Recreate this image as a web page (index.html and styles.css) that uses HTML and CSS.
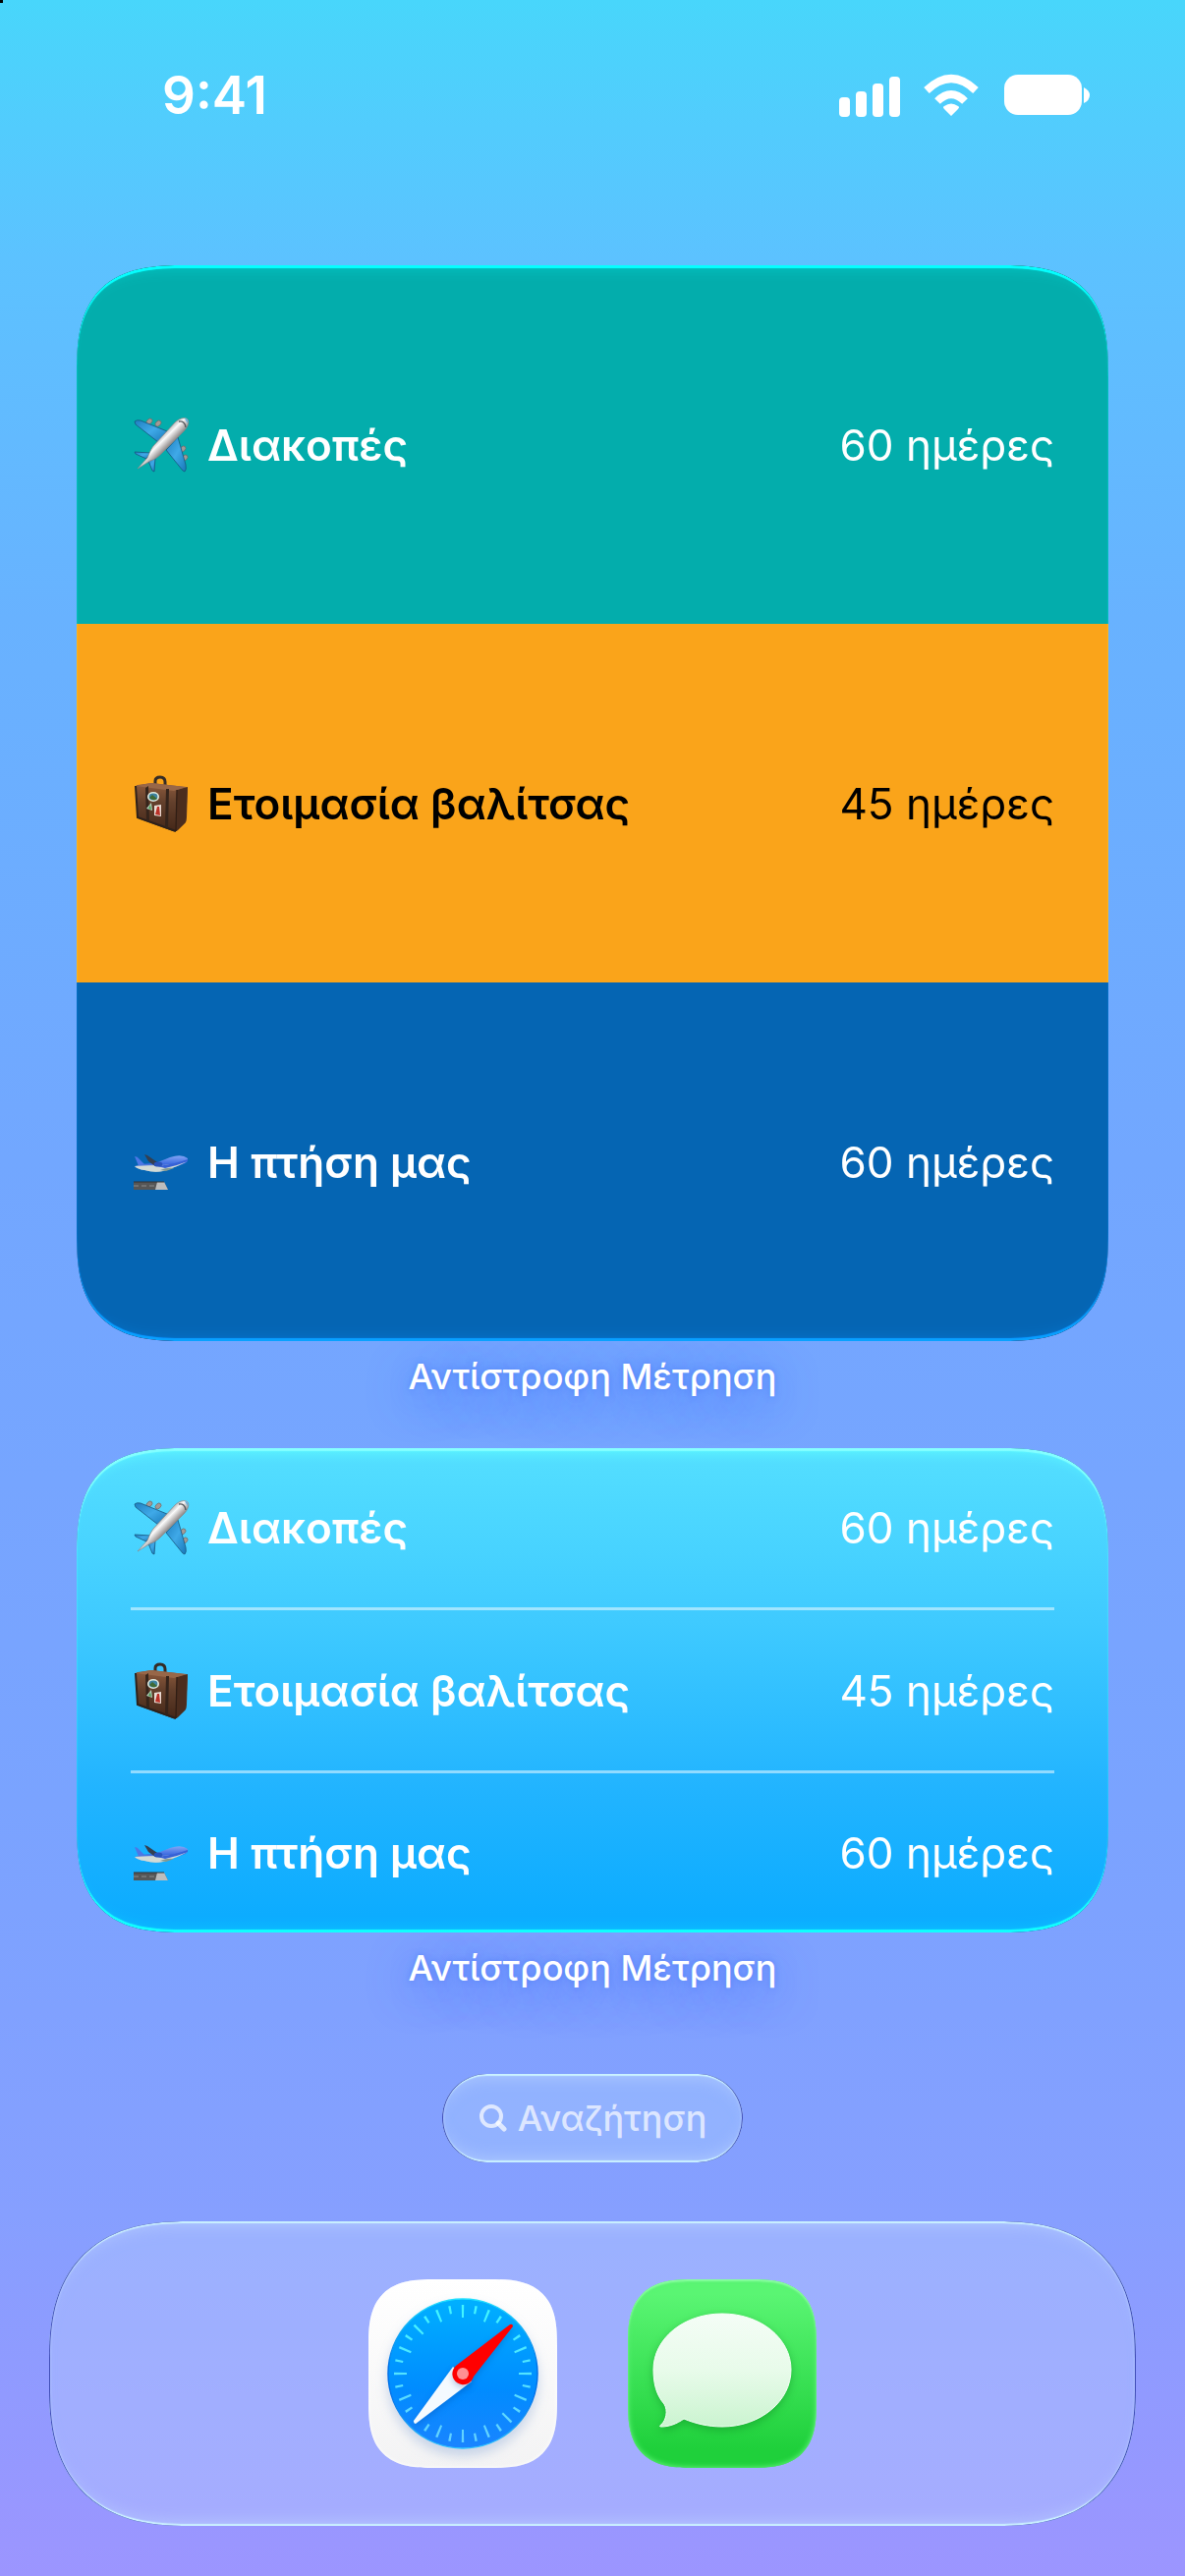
FILE: index.html
```
<!DOCTYPE html>
<html lang="el">
<head>
    <meta charset="UTF-8">
    <meta name="viewport" content="width=device-width, initial-scale=1.0">
    <title>Αντίστροφη Μέτρηση</title>
    <link rel="stylesheet" href="styles.css">
</head>
<body>
    <!-- shared emoji drawings -->
    <svg class="defs" width="0" height="0" aria-hidden="true">
        <defs>
            <linearGradient id="wing" x1="0" y1="0" x2="1" y2="1">
                <stop offset="0" stop-color="#1f7fc0"/>
                <stop offset="0.5" stop-color="#3fa9e8"/>
                <stop offset="1" stop-color="#1878b8"/>
            </linearGradient>
            <linearGradient id="hull" gradientUnits="userSpaceOnUse" x1="28" y1="22" x2="38" y2="32">
                <stop offset="0" stop-color="#a9a9ab"/>
                <stop offset="0.4" stop-color="#fafafa"/>
                <stop offset="1" stop-color="#8d8888"/>
            </linearGradient>
            <linearGradient id="leather" x1="0" y1="0" x2="0" y2="1">
                <stop offset="0" stop-color="#8d5a3c"/>
                <stop offset="0.4" stop-color="#63402c"/>
                <stop offset="1" stop-color="#442718"/>
            </linearGradient>
            <linearGradient id="jet" x1="0" y1="0" x2="0" y2="1">
                <stop offset="0" stop-color="#83a6f5"/>
                <stop offset="0.5" stop-color="#3e6ce0"/>
                <stop offset="1" stop-color="#b9c6cc"/>
            </linearGradient>
        </defs>

        <symbol id="emoji-plane" viewBox="0 0 60 60">
            <g fill="#a39a96" stroke="#6f6765" stroke-width="0.7">
                <ellipse cx="19" cy="6" rx="2.4" ry="3.4" transform="rotate(45 19 6)"/>
                <ellipse cx="28" cy="8" rx="2.4" ry="3.4" transform="rotate(45 28 8)"/>
                <ellipse cx="53" cy="34" rx="2.4" ry="3.4" transform="rotate(45 53 34)"/>
                <ellipse cx="55" cy="43" rx="2.4" ry="3.4" transform="rotate(45 55 43)"/>
            </g>
            <g fill="url(#wing)" stroke="#17567f" stroke-width="0.8" stroke-linejoin="round">
                <path d="M4 6 Q6 4 10 5 L37 16 L28 27 L5 9 Z"/>
                <path d="M55 57 Q57 55 56 50 L48 22 L36 35 L53 56 Z"/>
                <path d="M4 37 L20 38 L16 44 L5 39 Z"/>
                <path d="M24 57 L25 43 L18 46 L22 56 Z"/>
            </g>
            <path d="M58 4 C55 1 49 3 45 7 L23 31 C20 35 18 41 17 43 L7 54 L20 46 C24 45 28 42 31 39 L54 16 C58 12 60 7 58 4 Z" fill="url(#hull)" stroke="#8b8685" stroke-width="0.7"/>
            <path d="M49 6 Q55 5 56 12" fill="none" stroke="#55585c" stroke-width="1.4"/>
            <path d="M55 3 Q59 3 58 8 Z" fill="#5fb0e2"/>
        </symbol>

        <symbol id="emoji-bag" viewBox="0 0 60 60">
            <path d="M25 12 V7 Q25 3 30 3 Q35 3 35 8 V13" fill="none" stroke="#352c26" stroke-width="3"/>
            <path d="M7 11 Q5 11 5 15 L7 42 Q7 45 10 46 L43 58 Q46 59 48 57 L55 50 Q57 48 57 44 L58 16 Q58 13 55 13 L22 9 Z" fill="url(#leather)"/>
            <path d="M47 16 L58 13 L56 49 L46 58 Z" fill="#4b2d1e"/>
            <path d="M5 12 L20 9 L57 13 L44 17 Z" fill="#986748"/>
            <path d="M5 12 L7 44 L46 58" fill="none" stroke="#2d211b" stroke-width="2"/>
            <path d="M15 14 L16 47 L19 48 L18 12 Z M36 15 L35 54 L38 55 L39 15 Z" fill="#35241b"/>
            <path d="M47 16 L46 58" stroke="#2f1d14" stroke-width="1.2"/>
            <ellipse cx="23" cy="23" rx="6" ry="5" fill="#e2ebdf"/>
            <ellipse cx="23" cy="23" rx="4.4" ry="3.4" fill="#3f83a0"/>
            <path d="M19 24 L22 21 L27 25 Q23 28 19 24 Z" fill="#3f6a35"/>
            <path d="M16 35 L21 29 L22 37 Z" fill="#b9d3c0"/>
            <path d="M18 35 L20 31 L21 36 Z" fill="#4a9955"/>
            <path d="M24 32 L31 31 V43 L24 42 Z" fill="#e9dcd4"/>
            <path d="M27 33 L29 33 L30 42 L25 41 Z" fill="#bb3128"/>
        </symbol>

        <symbol id="emoji-takeoff" viewBox="0 0 60 60">
            <path d="M3 50 H34 L38 58 H3 Z" fill="#565656"/>
            <path d="M27 50 H34 L38 58 H25 Z" fill="#bdbdbd"/>
            <path d="M3 54 H25" stroke="#8b8b8b" stroke-width="1" stroke-dasharray="5 3"/>
            <path d="M3 50 H34" stroke="#333" stroke-width="1"/>
            <path d="M4 24 Q7 24 9 27 L17 35 L9 36 Z" fill="#4c77e6"/>
            <path d="M4 34 Q12 31 25 31 L40 25 Q52 21 58 26 Q59 30 53 32 L33 39 Q24 41 14 38 Q7 37 4 34 Z" fill="url(#jet)"/>
            <path d="M4 34 Q18 33 34 33 Q46 32 57 29 Q52 33 33 39 Q24 41 14 38 Q7 37 4 34 Z" fill="#d2dad6"/>
            <path d="M27 34 Q45 32 58 27 L58 29 Q46 34 35 36 Z" fill="#3661d6"/>
            <path d="M14 22 L17 23 L30 32 L25 34 L18 29 Z" fill="#343f50"/>
            <ellipse cx="28" cy="32" rx="4.4" ry="2.6" fill="#2853bb"/>
            <path d="M30 38 Q37 35 44 36 L36 39 Z" fill="#829a92"/>
        </symbol>
    </svg>

    <header class="status-bar">
        <time class="clock">9:41</time>
        <svg class="status-icons" viewBox="0 0 256 44" fill="#fff" role="img" aria-label="Σήμα, Wi-Fi, μπαταρία">
            <rect x="1" y="24" width="11" height="20" rx="4"/>
            <rect x="18" y="18" width="11" height="26" rx="4"/>
            <rect x="35" y="10" width="11" height="34" rx="4"/>
            <rect x="52" y="3" width="11" height="41" rx="4"/>
            <path d="M115 43 L108 36 Q106 34 108 33 Q115 28 122 33 Q124 34 122 36 Z"/>
            <path d="M101 28 Q115 14 129 28" fill="none" stroke="#fff" stroke-width="8"/>
            <path d="M90 17 Q115 -7 140 17" fill="none" stroke="#fff" stroke-width="8"/>
            <rect x="169" y="1" width="79" height="41" rx="14"/>
            <path d="M250 14 Q256 17 256 22 Q256 27 250 30 Z"/>
        </svg>
    </header>

    <main class="home">
        <section class="widget-block">
            <ul class="widget widget-large">
                <li class="event teal">
                    <svg class="emoji" aria-hidden="true"><use href="#emoji-plane"/></svg>
                    <span class="event-name">Διακοπές</span>
                    <span class="event-days">60 ημέρες</span>
                </li>
                <li class="event orange">
                    <svg class="emoji" aria-hidden="true"><use href="#emoji-bag"/></svg>
                    <span class="event-name">Ετοιμασία βαλίτσας</span>
                    <span class="event-days">45 ημέρες</span>
                </li>
                <li class="event blue">
                    <svg class="emoji" aria-hidden="true"><use href="#emoji-takeoff"/></svg>
                    <span class="event-name">Η πτήση μας</span>
                    <span class="event-days">60 ημέρες</span>
                </li>
            </ul>
            <h2 class="widget-label">Αντίστροφη Μέτρηση</h2>
        </section>

        <section class="widget-block">
            <ul class="widget widget-medium">
                <li class="event">
                    <svg class="emoji" aria-hidden="true"><use href="#emoji-plane"/></svg>
                    <span class="event-name">Διακοπές</span>
                    <span class="event-days">60 ημέρες</span>
                </li>
                <li class="event">
                    <svg class="emoji" aria-hidden="true"><use href="#emoji-bag"/></svg>
                    <span class="event-name">Ετοιμασία βαλίτσας</span>
                    <span class="event-days">45 ημέρες</span>
                </li>
                <li class="event">
                    <svg class="emoji" aria-hidden="true"><use href="#emoji-takeoff"/></svg>
                    <span class="event-name">Η πτήση μας</span>
                    <span class="event-days">60 ημέρες</span>
                </li>
            </ul>
            <h2 class="widget-label">Αντίστροφη Μέτρηση</h2>
        </section>

        <button class="search-button" type="button">
            <svg class="search-icon" viewBox="0 0 30 30" fill="none" stroke="currentColor" stroke-linecap="round" aria-hidden="true">
                <circle cx="13" cy="13" r="10" stroke-width="4"/>
                <path d="M20 20 L26 26" stroke-width="5"/>
            </svg>
            Αναζήτηση
        </button>
    </main>

    <nav class="dock">
        <a class="app" href="#" aria-label="Safari">
            <svg class="app-icon safari" viewBox="0 0 192 192">
                <defs>
                    <linearGradient id="dial" x1="0" y1="0" x2="0" y2="1">
                        <stop offset="0" stop-color="#00b0ff"/>
                        <stop offset="0.6" stop-color="#008cff"/>
                        <stop offset="1" stop-color="#1a84ff"/>
                    </linearGradient>
                    <linearGradient id="dialRim" x1="0" y1="0" x2="0" y2="1">
                        <stop offset="0" stop-color="#1fe0ff"/>
                        <stop offset="0.45" stop-color="#0070e8"/>
                        <stop offset="0.65" stop-color="#0070e8"/>
                        <stop offset="1" stop-color="#2cc4ff"/>
                    </linearGradient>
                    <linearGradient id="ticks" x1="0" y1="0" x2="0" y2="1">
                        <stop offset="0" stop-color="#42f4ff"/>
                        <stop offset="1" stop-color="#62d2ff"/>
                    </linearGradient>
                </defs>
                <circle class="dial" cx="96" cy="96" r="76" fill="url(#dial)" stroke="url(#dialRim)" stroke-width="1.5"/>
                <g fill="none" stroke="url(#ticks)">
                    <circle cx="96" cy="96" r="63.5" stroke-width="13" pathLength="1600" stroke-dasharray="9 91" stroke-dashoffset="4.5"/>
                    <circle cx="96" cy="96" r="66" stroke-width="8" pathLength="1600" stroke-dasharray="9 91" stroke-dashoffset="54.5"/>
                </g>
                <path class="needle" d="M48 147 Q46 147 46 144 L86 89 L105 104 Z" fill="#f4faff"/>
                <path class="needle" d="M144 46 Q147 45 147 48 L107 99 A11 11 0 1 1 89 88 Z" fill="#ff0000"/>
                <circle cx="96" cy="96" r="6" fill="#ff8f92"/>
            </svg>
        </a>
        <a class="app" href="#" aria-label="Μηνύματα">
            <svg class="app-icon messages" viewBox="0 0 192 192">
                <defs>
                    <linearGradient id="bubble" x1="0" y1="0" x2="0" y2="1">
                        <stop offset="0" stop-color="#f4fdf6"/>
                        <stop offset="0.5" stop-color="#e8fbea"/>
                        <stop offset="1" stop-color="#cbf4d0"/>
                    </linearGradient>
                </defs>
                <path class="bubble" d="M96 35 C135 35 166 60 166 92 S135 150 96 150 C82 150 69 147 57 142 C50 147 42 150 34 150 C32 150 32 149 34 148 C39 143 41 134 37 127 C29 118 26 106 26 92 C26 60 57 35 96 35 Z" fill="url(#bubble)" stroke="#f8fff9" stroke-width="1"/>
            </svg>
        </a>
    </nav>
</body>
</html>
```
FILE: styles.css
```
:root {
    --side: 78px;
    --inset: 55px;
    --text-size: 44px;
    --label-size: 36px;
    --teal: #03adac;
    --orange: #faa41a;
    --blue: #0565b3;
}

* {
    box-sizing: border-box;
}

body {
    margin: 0;
    min-height: 100vh;
    display: flex;
    flex-direction: column;
    font-family: Inter, "Noto Sans", sans-serif;
    color: white;
    background: linear-gradient(to bottom, #48d6fb 0%, #5cc2ff 10%, #68b2ff 24%, #72a7ff 45%, #7aa3ff 70%, #869fff 86%, #9c95ff 100%);
}

/* screen corner mark */
body::before {
    content: "";
    position: absolute;
    top: 0;
    left: 0;
    width: 3px;
    height: 3px;
    background: black;
}

.defs {
    position: absolute;
}

/* status bar */
.status-bar {
    display: flex;
    justify-content: space-between;
    align-items: center;
    height: 194px;
    padding: 0 97px 0 165px;
}

.clock {
    font-size: 53px;
    font-weight: 600;
}

.status-icons {
    width: 256px;
    height: 44px;
}

/* widgets */
.home {
    flex: 1;
    display: flex;
    flex-direction: column;
    padding: 76px var(--side) 60px;
}

.widget {
    position: relative;
    display: grid;
    margin: 0;
    padding: 0;
    list-style: none;
    overflow: hidden;
    isolation: isolate;
    border-radius: 84px;
}

/* bright glass rim on the top and bottom edges */
.widget::after {
    content: "";
    position: absolute;
    inset: 0;
    border-radius: inherit;
    mix-blend-mode: color-dodge;
    pointer-events: none;
    box-shadow:
        inset 0 3px 1px rgb(95, 95, 95),
        inset 0 -3px 1px rgb(95, 95, 95),
        inset 0 14px 14px -10px rgb(30, 30, 30),
        inset 0 -14px 14px -10px rgb(30, 30, 30);
}

.widget-large {
    grid-auto-rows: 365px;
}

/* the divider is part of the second and third row */
.widget-medium {
    grid-template-rows: 162px 166px 165px;
    padding: 0 var(--inset);
    background: linear-gradient(to bottom, #54dfff, #3fcaff 36%, #22b4ff 70%, #0aabff);
}

.event {
    display: flex;
    align-items: center;
    font-size: var(--text-size);
}

.widget-large .event {
    padding: 0 var(--inset);
}

.widget-medium .event + .event {
    border-top: 3px solid rgba(255, 255, 255, 0.5);
}

.teal {
    background: var(--teal);
}

.orange {
    background: var(--orange);
    color: black;
}

.blue {
    background: var(--blue);
}

.emoji {
    width: 60px;
    height: 60px;
    margin-right: 18px;
}

.event-name {
    font-weight: 600;
}

.event-days {
    margin-left: auto;
}

.widget-label {
    margin: 14px 0 51px;
    font-size: var(--label-size);
    font-weight: 500;
    line-height: 44px;
    text-align: center;
    text-shadow: 0 0 6px rgba(60, 110, 240, 0.5), 0 10px 44px rgba(50, 100, 255, 0.8);
}

/* search */
.search-button {
    align-self: center;
    display: flex;
    align-items: center;
    gap: 10px;
    height: 90px;
    margin-top: 35px;
    padding: 0 37px;
    border: none;
    border-radius: 45px;
    font: inherit;
    font-size: var(--label-size);
    font-weight: 500;
    color: rgba(255, 255, 255, 0.7);
    background: rgba(165, 200, 255, 0.45);
    cursor: pointer;
}

.search-button,
.dock {
    box-shadow:
        inset 1px 0 0 #3f4cb6,
        inset -1px 0 0 #3f4cb6,
        inset 0 2px 1px rgba(205, 245, 255, 0.9),
        inset 0 -2px 1px rgba(205, 245, 255, 0.9),
        inset 0 0 3px 1px rgba(200, 225, 255, 0.5),
        inset 0 14px 16px -10px rgba(190, 215, 255, 0.6),
        inset 0 -14px 16px -10px rgba(190, 215, 255, 0.6);
}

.search-icon {
    width: 30px;
    height: 30px;
}

/* dock */
.dock {
    display: flex;
    justify-content: center;
    gap: 72px;
    margin: 0 50px 51px;
    padding: 59px;
    border-radius: 120px;
    background: rgba(185, 205, 255, 0.4);
}

.app {
    display: block;
    height: 192px;
}

.app-icon {
    width: 192px;
    height: 192px;
    border-radius: 50px;
}

.safari {
    background: linear-gradient(to bottom, #ffffff, #f3f3f4);
    box-shadow: inset 0 0 4px white;
}

.messages {
    background: linear-gradient(to bottom, #5af573 8%, #1fd03b 90%);
    box-shadow: inset 0 2px 2px #8affa0, inset 0 0 5px 1px #5aee74;
}

.dial {
    filter: drop-shadow(0 7px 6px rgba(60, 110, 190, 0.25));
}

.needle {
    filter: drop-shadow(0 3px 3px rgba(0, 50, 140, 0.25));
}

.bubble {
    filter: drop-shadow(0 3px 4px rgba(0, 110, 20, 0.35));
}

/* continuous corners where the browser can draw them */
@supports (corner-shape: superellipse(1.5)) {
    .widget,
    .widget::after {
        border-radius: 112px;
        corner-shape: superellipse(1.5);
    }

    .dock {
        border-radius: 140px;
        corner-shape: superellipse(1.3);
    }

    .app-icon {
        border-radius: 68px;
        corner-shape: superellipse(1.5);
    }
}
```
